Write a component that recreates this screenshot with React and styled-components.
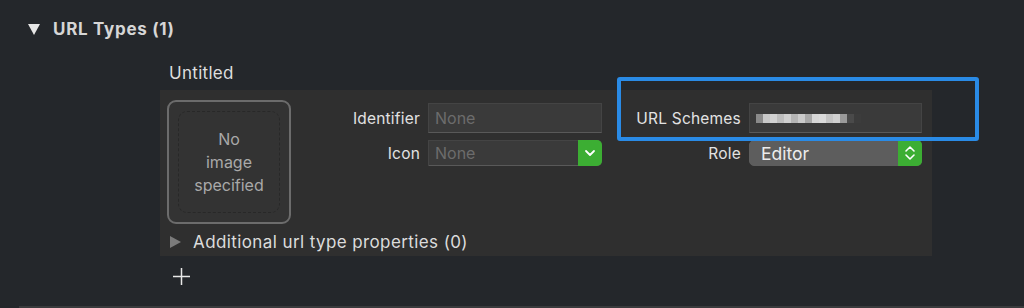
import React from 'react'
import styled, { createGlobalStyle } from 'styled-components'

const GlobalStyle = createGlobalStyle`
    html, body {
        margin: 0;
        padding: 0;
        background: #24272b;
    }
    body {
        font-family: Inter, "Liberation Sans", sans-serif;
        -webkit-font-smoothing: antialiased;
    }
`

const Page = styled.div`
    position: relative;
    width: 1024px;
    height: 308px;
    overflow: hidden;
    background: #24272b;
`

const Header = styled.div`
    display: flex;
    align-items: center;
    gap: 13px;
    height: 22px;
    padding: 18px 0 0 28px;
`

const DownTriangle = styled.span`
    width: 0;
    height: 0;
    border-left: 6.5px solid transparent;
    border-right: 6.5px solid transparent;
    border-top: 11px solid #e6e6e6;
`

const Title = styled.div`
    font-size: 17px;
    font-weight: 700;
    color: #d6d6d6;
    letter-spacing: 0.7px;
`

const Section = styled.div`
    margin-left: 160px;
    width: 772px;
`

const ItemName = styled.div`
    padding: 23px 0 0 9px;
    height: 27px;
    font-size: 17px;
    letter-spacing: 0.3px;
    color: #dedede;
`

const Panel = styled.div`
    background: #2f2f2f;
    height: 166px;
    padding: 10px 0 0 7px;
    box-sizing: border-box;
`

const Row = styled.div`
    display: flex;
    align-items: flex-start;
`

const ImageWell = styled.div`
    width: 124px;
    height: 124px;
    box-sizing: border-box;
    border: 2.5px solid #6c6c6c;
    border-radius: 9px;
    background: #333333;
    padding: 9px;
    flex-shrink: 0;
`

const WellInner = styled.div`
    height: 100%;
    border: 1.5px dashed #282828;
    border-radius: 9px;
    box-sizing: border-box;
    display: flex;
    align-items: center;
    justify-content: center;
    text-align: center;
    font-size: 16px;
    line-height: 23px;
    color: #a9a9a9;
`

const Form = styled.div`
    display: grid;
    grid-template-columns: 120px 174px 131px 173px;
    column-gap: 8px;
    row-gap: 7px;
    margin: 3px 0 0 9px;
    align-items: center;
`

const Label = styled.div`
    text-align: right;
    font-size: 15.5px;
    letter-spacing: 0.2px;
    color: #e2e2e2;
    white-space: nowrap;
`

const TextField = styled.div`
    height: 30px;
    box-sizing: border-box;
    background: #3a3a3a;
    border: 1px solid #444444;
    border-bottom-color: #595959;
    padding: 0 6px;
    display: flex;
    align-items: center;
    font-size: 16px;
    color: #6c6c6c;
`

const Popup = styled.div`
    position: relative;
    height: 26px;
    box-sizing: border-box;
    display: flex;
    align-items: center;
    background: ${(p) => (p.$enabled ? '#5d5d5d' : '#3a3a3a')};
    border: 1px solid ${(p) => (p.$enabled ? '#5d5d5d' : '#444444')};
    border-bottom-color: ${(p) => (p.$enabled ? '#5d5d5d' : '#595959')};
    border-radius: ${(p) => (p.$enabled ? '5px' : '0 5px 5px 0')};
    padding-left: ${(p) => (p.$enabled ? '11px' : '6px')};
    font-size: ${(p) => (p.$enabled ? '17.5px' : '16px')};
    color: ${(p) => (p.$enabled ? '#ececec' : '#6c6c6c')};
`

const GreenButton = styled.div`
    position: absolute;
    right: -1px;
    top: -1px;
    bottom: -1px;
    width: 24px;
    background: #3cae33;
    border-radius: 0 5px 5px 0;
    display: flex;
    align-items: center;
    justify-content: center;
`

const Blurred = styled.div`
    display: flex;
    height: 9px;
    margin-top: 1px;
`

const Pixel = styled.span`
    width: 7px;
    height: 9px;
`

const Disclosure = styled.div`
    display: flex;
    align-items: center;
    gap: 12px;
    margin: 7px 0 0 3px;
    height: 22px;
`

const RightTriangle = styled.span`
    width: 0;
    height: 0;
    border-top: 6px solid transparent;
    border-bottom: 6px solid transparent;
    border-left: 11px solid #7b7b7b;
`

const DisclosureText = styled.div`
    font-size: 17px;
    letter-spacing: 0.4px;
    color: #dcdcdc;
`

const AddButton = styled.div`
    margin: 11px 0 0 12px;
    width: 19px;
    height: 19px;
`

const Highlight = styled.div`
    position: absolute;
    left: 617px;
    top: 77px;
    width: 362px;
    height: 64px;
    box-sizing: border-box;
    border: 4px solid #2a8be6;
    border-radius: 3px;
`

const BottomStrip = styled.div`
    position: absolute;
    left: 19px;
    right: 0;
    bottom: 0;
    height: 2px;
    background: #3a3b3d;
`

const blurShades = [
    '#8a8a8a', '#c8c8c8', '#d2d2d2', '#bdbdbd', '#cfcfcf', '#b4b4b4', '#cacaca',
    '#a8a8a8', '#d6d6d6', '#dadada', '#c4c4c4', '#d0d0d0', '#9a9a9a', '#4a4a4a', '#3c3c3c',
]

const ChevronDown = () => (
    <svg width="12" height="8" viewBox="0 0 12 8">
        <path d="M2 2 L6 6 L10 2" fill="none" stroke="#fff" strokeWidth="1.8" strokeLinecap="round" strokeLinejoin="round" />
    </svg>
)

const UpDown = () => (
    <svg width="12" height="18" viewBox="0 0 12 18">
        <path d="M2 7 L6 3 L10 7" fill="none" stroke="#fff" strokeWidth="1.6" strokeLinecap="round" strokeLinejoin="round" />
        <path d="M2 11 L6 15 L10 11" fill="none" stroke="#fff" strokeWidth="1.6" strokeLinecap="round" strokeLinejoin="round" />
    </svg>
)

const Plus = () => (
    <svg width="19" height="19" viewBox="0 0 19 19">
        <path d="M9.5 1 V18 M1 9.5 H18" stroke="#e8e8e8" strokeWidth="1.5" />
    </svg>
)

const App = () => {
    return (
        <Page>
            <GlobalStyle />
            <Header>
                <DownTriangle />
                <Title>URL Types (1)</Title>
            </Header>
            <Section>
                <ItemName>Untitled</ItemName>
                <Panel>
                    <Row>
                        <ImageWell>
                            <WellInner>
                                No
                                <br />
                                image
                                <br />
                                specified
                            </WellInner>
                        </ImageWell>
                        <Form>
                            <Label>Identifier</Label>
                            <TextField>None</TextField>
                            <Label>URL Schemes</Label>
                            <TextField>
                                <Blurred>
                                    {blurShades.map((shade, i) => (
                                        <Pixel key={i} style={{ background: shade }} />
                                    ))}
                                </Blurred>
                            </TextField>
                            <Label>Icon</Label>
                            <Popup>
                                None
                                <GreenButton>
                                    <ChevronDown />
                                </GreenButton>
                            </Popup>
                            <Label>Role</Label>
                            <Popup $enabled>
                                Editor
                                <GreenButton>
                                    <UpDown />
                                </GreenButton>
                            </Popup>
                        </Form>
                    </Row>
                    <Disclosure>
                        <RightTriangle />
                        <DisclosureText>Additional url type properties (0)</DisclosureText>
                    </Disclosure>
                </Panel>
                <AddButton>
                    <Plus />
                </AddButton>
            </Section>
            <Highlight />
            <BottomStrip />
        </Page>
    )
}

export default App
